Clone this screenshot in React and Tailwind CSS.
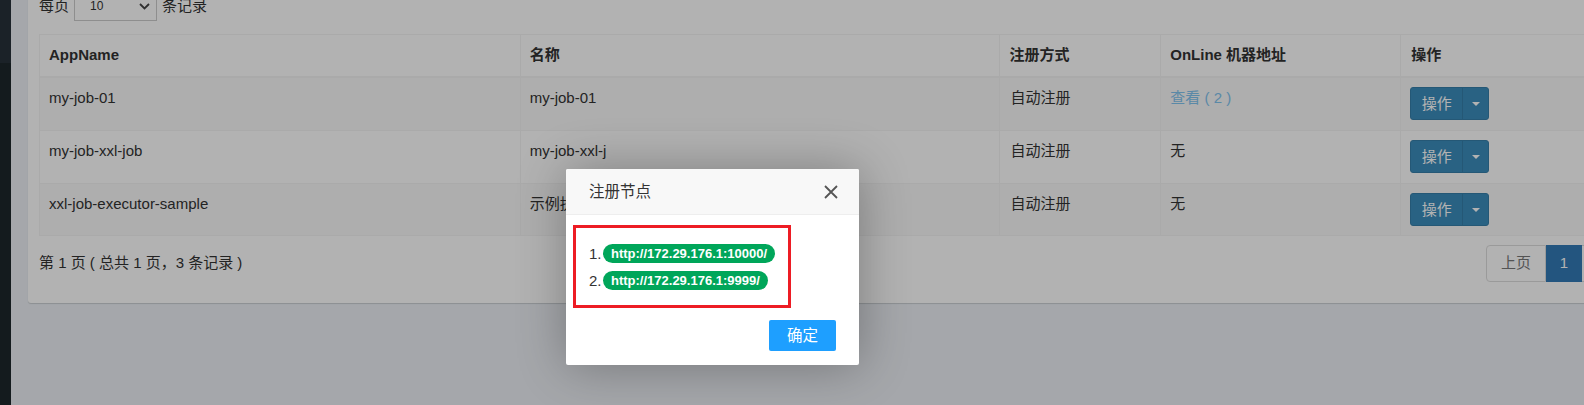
import React from 'react';

const rows = [
    { appName: 'my-job-01', title: 'my-job-01', type: '自动注册', online: 2, h: 'h-[53px]' },
    { appName: 'my-job-xxl-job', title: 'my-job-xxl-j', type: '自动注册', online: 0, h: 'h-[53px]' },
    { appName: 'xxl-job-executor-sample', title: '示例执行器', type: '自动注册', online: 0, h: 'h-[52px]' },
];

const nodes = ['http://172.29.176.1:10000/', 'http://172.29.176.1:9999/'];

const SplitButton = () => (
    <div className="flex h-[33px] w-[79px] rounded-[3px] border border-[#367fa9] bg-[#3c8dbc] text-white">
        <div className="flex w-[51px] items-center justify-center text-[15px]">操作</div>
        <div className="flex flex-1 items-center justify-center border-l border-[#367fa9]">
            <svg width="8" height="4" viewBox="0 0 8 4"><path d="M0 0h8L4 4z" fill="#fff" /></svg>
        </div>
    </div>
);

const App = () => {
    return (
        <div className="relative flex h-[405px] w-[1584px] overflow-hidden bg-[#ecf0f5] font-['Liberation_Sans','Noto_Sans_CJK_SC',sans-serif] text-[#333]">
            {/* sidebar edge */}
            <div className="flex w-[11px] shrink-0 flex-col">
                <div className="h-[63px] bg-[#27323a]" />
                <div className="flex-1 bg-[#1d282c]" />
            </div>

            {/* content */}
            <div className="min-w-0 flex-1 pl-[17px]">
                <div className="-mt-[20px] w-[1625px] rounded-[3px] bg-white px-[11px] pt-[11px] pb-[21px] shadow-[0_1px_1px_rgba(0,0,0,0.15)]">
                    {/* page size */}
                    <div className="flex h-[30px] items-center text-[15px]">
                        <span>每页</span>
                        <div className="mx-[5px] flex h-[30px] w-[83px] items-center justify-between border border-[#ccc] pl-[15px] pr-[6px] text-[12px]">
                            <span>10</span>
                            <svg width="11" height="7" viewBox="0 0 11 7"><path d="M1 1l4.5 4.5L10 1" stroke="#444" strokeWidth="1.8" fill="none" /></svg>
                        </div>
                        <span>条记录</span>
                    </div>

                    {/* table */}
                    <div className="mt-[13px] w-[1603px] border-t border-l border-[#f4f4f4] text-[15px]">
                        <div className="flex h-[43px] border-b-2 border-[#f4f4f4] font-bold">
                            <div className="flex w-[481px] items-center border-r border-[#f4f4f4] px-[9px]">AppName</div>
                            <div className="flex w-[480px] items-center border-r border-[#f4f4f4] px-[9px]">名称</div>
                            <div className="flex w-[161px] items-center border-r border-[#f4f4f4] px-[9px]">注册方式</div>
                            <div className="flex w-[240px] items-center border-r border-[#f4f4f4] px-[9px]">OnLine 机器地址</div>
                            <div className="flex w-[241px] items-center border-r border-[#f4f4f4] px-[10px]">操作</div>
                        </div>
                        {rows.map((r, i) => (
                            <div key={r.appName} className={`flex ${r.h} border-b border-[#f4f4f4] leading-[22px] ${i % 2 === 0 ? 'bg-[#f9f9f9]' : 'bg-white'}`}>
                                <div className="w-[481px] border-r border-[#f4f4f4] px-[9px] pt-[9px]">{r.appName}</div>
                                <div className="w-[480px] border-r border-[#f4f4f4] px-[9px] pt-[9px]">{r.title}</div>
                                <div className="w-[161px] border-r border-[#f4f4f4] px-[10px] pt-[9px]">{r.type}</div>
                                <div className="w-[240px] border-r border-[#f4f4f4] px-[9px] pt-[9px]">
                                    {r.online > 0 ? <span className="text-[#82c4ef]">查看 ( {r.online} )</span> : '无'}
                                </div>
                                <div className="w-[241px] border-r border-[#f4f4f4] px-[9px] pt-[9px]">
                                    <SplitButton />
                                </div>
                            </div>
                        ))}
                    </div>

                    {/* pagination */}
                    <div className="mt-[9px] flex w-[1603px] items-center justify-between text-[15px]">
                        <span>第 1 页 ( 总共 1 页，3 条记录 )</span>
                        <div className="flex h-[37px]">
                            <div className="flex w-[60px] items-center justify-center rounded-l-[4px] border border-[#ddd] text-[#777]">上页</div>
                            <div className="flex w-[36px] items-center justify-center border border-[#337ab7] bg-[#337ab7] text-white">1</div>
                            <div className="flex w-[60px] items-center justify-center rounded-r-[4px] border border-l-0 border-[#ddd] text-[#777]">下页</div>
                        </div>
                    </div>
                </div>
            </div>

            {/* dim overlay */}
            <div className="absolute inset-0 bg-black/30" />

            {/* modal */}
            <div className="absolute top-[169px] left-[566px] w-[293px] rounded-[2px] bg-white shadow-[1px_1px_50px_rgba(0,0,0,0.3)]">
                <div className="flex h-[46px] items-center justify-between rounded-t-[2px] border-b border-[#eee] bg-[#f8f8f8] pl-[23px] pr-[21px]">
                    <span className="text-[15.5px] text-[#333]">注册节点</span>
                    <svg width="14" height="14" viewBox="0 0 14 14"><path d="M1 1l12 12M13 1L1 13" stroke="#555" strokeWidth="1.8" /></svg>
                </div>
                <div className="px-[7px] pt-[10px]">
                    <div className="w-[218px] border-[3px] border-[#ed1c24] pt-[16px] pb-[15px] pl-[13px]">
                        <ol className="flex flex-col gap-[8px] text-[15px]">
                            {nodes.map((n, i) => (
                                <li key={n} className="flex h-[19px] items-center leading-[19px]">
                                    <span className="w-[14px]">{i + 1}.</span>
                                    <span className="rounded-full bg-[#00a65a] px-[8px] text-[13px] leading-[19px] font-bold text-white">{n}</span>
                                </li>
                            ))}
                        </ol>
                    </div>
                </div>
                <div className="flex justify-end pt-[12px] pr-[23px] pb-[14px]">
                    <div className="flex h-[31px] w-[67px] items-center justify-center rounded-[2px] bg-[#1e9fff] text-[15.5px] text-white">确定</div>
                </div>
            </div>
        </div>
    );
};

export default App;
